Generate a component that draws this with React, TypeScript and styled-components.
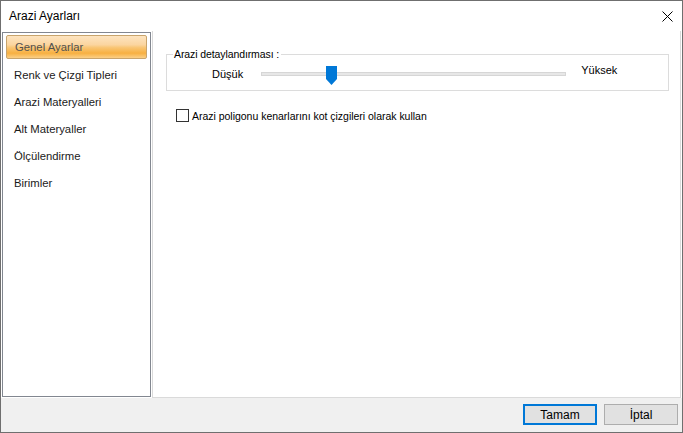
import React from "react";
import styled, { createGlobalStyle } from "styled-components";

const Global = createGlobalStyle`
  html, body { margin: 0; padding: 0; background: #ffffff; }
  body { font-family: "Liberation Sans", Arial, sans-serif; }
  * { box-sizing: border-box; }
`;

const Window = styled.div`
  width: 683px;
  height: 433px;
  border: 1px solid #6f6f6f;
  display: flex;
  flex-direction: column;
  background: #ffffff;
  overflow: hidden;
`;

const TitleBar = styled.div`
  height: 30px;
  flex: none;
  display: flex;
  align-items: center;
  justify-content: space-between;
  padding: 0 9px 0 8px;
  background: #ffffff;
`;

const Title = styled.span`
  font-size: 12px;
  color: #000000;
`;

const CloseButton = styled.button`
  border: 0;
  background: transparent;
  padding: 0;
  width: 12px;
  height: 12px;
  display: flex;
  align-items: center;
  justify-content: center;
`;

const Main = styled.div`
  flex: 1;
  display: flex;
  gap: 1px;
  padding: 0 1px 0 1px;
  background: #ffffff;
  min-height: 0;
`;

const NavList = styled.ul`
  list-style: none;
  margin: 1px 0 0 0;
  padding: 2px 3px;
  width: 149px;
  height: 365px;
  flex: none;
  border: 1px solid #828790;
  background: #ffffff;
  display: flex;
  flex-direction: column;
`;

const NavItem = styled.li<{ $active?: boolean }>`
  height: ${(p) => (p.$active ? "24px" : "27px")};
  margin-bottom: ${(p) => (p.$active ? "2px" : "0")};
  flex: none;
  display: flex;
  align-items: center;
  padding-left: ${(p) => (p.$active ? "8px" : "7px")};
  font-size: 11.3px;
  color: ${(p) => (p.$active ? "#505050" : "#1a1a1a")};
  border-radius: 2px;
  border: 1px solid ${(p) => (p.$active ? "#c8a46c" : "transparent")};
  background: ${(p) =>
    p.$active
      ? "linear-gradient(#fde4c0 0%, #fbd59f 40%, #f9c676 52%, #f7b041 78%, #fbcf86 100%)"
      : "transparent"};
`;

const ContentPanel = styled.div`
  flex: 1;
  height: 367px;
  border: 1px solid #dadada;
  border-top: 0;
  background: #ffffff;
  padding: 17px 11px 0 13px;
  display: flex;
  flex-direction: column;
`;

const GroupBox = styled.fieldset`
  margin: 0;
  padding: 0;
  min-width: 0;
  border: 1px solid #dcdcdc;
  height: 43px;
`;

const Legend = styled.legend`
  margin-left: 6px;
  padding: 0 2px 0 1px;
  font-size: 10.5px;
  letter-spacing: -0.1px;
  color: #000000;
  line-height: 13px;
`;

const SliderRow = styled.div`
  display: flex;
  align-items: flex-start;
  padding-left: 45px;
  margin-top: 5px;
`;

const RangeLabel = styled.span<{ $offset: number }>`
  font-size: 11px;
  color: #000000;
  line-height: 13px;
  margin-top: ${(p) => p.$offset}px;
`;

const SliderTrackArea = styled.div`
  position: relative;
  width: 305px;
  height: 20px;
  margin: 0 15px 0 18px;
`;

const Track = styled.div`
  position: absolute;
  left: 0;
  right: 0;
  top: 6px;
  height: 4px;
  background: #e7e7e7;
  border: 1px solid #d6d6d6;
`;

const Thumb = styled.svg`
  position: absolute;
  top: 0;
  width: 11px;
  height: 19px;
`;

const CheckRow = styled.label`
  display: flex;
  align-items: center;
  margin-top: 18px;
  margin-left: 10px;
  gap: 3px;
  font-size: 10.5px;
  letter-spacing: -0.02px;
  color: #000000;
`;

const CheckBox = styled.span`
  width: 13px;
  height: 13px;
  border: 1px solid #333333;
  background: #ffffff;
  flex: none;
`;

const Footer = styled.div`
  height: 34px;
  flex: none;
  background: #f0f0f0;
  display: flex;
  justify-content: flex-end;
  align-items: flex-start;
  gap: 7px;
  padding: 6px 4px 0 0;
`;

const Button = styled.button<{ $default?: boolean }>`
  width: 74px;
  height: 21px;
  font-family: "Liberation Sans", Arial, sans-serif;
  font-size: 12px;
  color: #000000;
  background: #e1e1e1;
  border: ${(p) => (p.$default ? "2px solid #0078d7" : "1px solid #adadad")};
  padding: 0;
`;

const navItems = [
  "Genel Ayarlar",
  "Renk ve Çizgi Tipleri",
  "Arazi Materyalleri",
  "Alt Materyaller",
  "Ölçülendirme",
  "Birimler",
];

export default function App() {
  const value = 0.22;
  const trackWidth = 305;
  const thumbWidth = 11;
  const left = Math.round(value * (trackWidth - thumbWidth));
  return (
    <>
      <Global />
      <Window>
        <TitleBar>
          <Title>Arazi Ayarları</Title>
          <CloseButton aria-label="Kapat">
            <svg width="11" height="11" viewBox="0 0 11 11">
              <path d="M0.5 0.5 L10.5 10.5 M10.5 0.5 L0.5 10.5" stroke="#000" strokeWidth="1" fill="none" />
            </svg>
          </CloseButton>
        </TitleBar>
        <Main>
          <NavList>
            {navItems.map((n, i) => (
              <NavItem key={n} $active={i === 0}>
                {n}
              </NavItem>
            ))}
          </NavList>
          <ContentPanel>
            <GroupBox>
              <Legend>Arazi detaylandırması :</Legend>
              <SliderRow>
                <RangeLabel $offset={2}>Düşük</RangeLabel>
                <SliderTrackArea>
                  <Track />
                  <Thumb viewBox="0 0 11 19" style={{ left }}>
                    <path d="M0 0 H11 V13 L5.5 19 L0 13 Z" fill="#0078d7" />
                  </Thumb>
                </SliderTrackArea>
                <RangeLabel $offset={-2}>Yüksek</RangeLabel>
              </SliderRow>
            </GroupBox>
            <CheckRow>
              <CheckBox />
              <span>Arazi poligonu kenarlarını kot çizgileri olarak kullan</span>
            </CheckRow>
          </ContentPanel>
        </Main>
        <Footer>
          <Button $default>Tamam</Button>
          <Button>İptal</Button>
        </Footer>
      </Window>
    </>
  );
}
